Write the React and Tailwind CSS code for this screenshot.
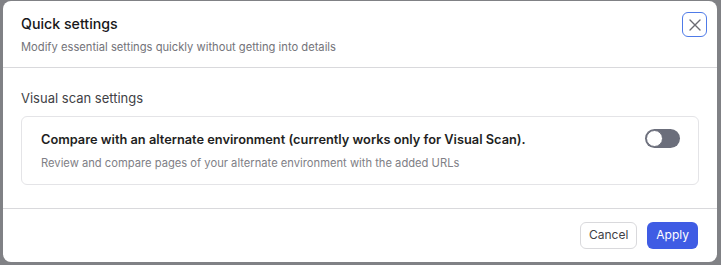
import React, { useState } from 'react';

const App = () => {
  const [enabled, setEnabled] = useState(false);

  return (
    <div className="w-[721px] h-[265px] bg-[#808185] pl-[3px] pr-[4px] pt-[1px] pb-[3px] font-['Inter',sans-serif]">
      <div className="h-full bg-white rounded-lg flex flex-col">
        {/* Header */}
        <div className="flex items-start justify-between pl-[18px] pr-[10px] pt-[10px] h-[67px] border-b border-[#d9d9dc]">
          <div className="pt-[4px]">
            <h2 className="text-[14.2px] leading-[18px] font-medium text-[#18181b]">Quick settings</h2>
            <p className="mt-[7px] text-[11.2px] leading-[14px] text-[#737379]">
              Modify essential settings quickly without getting into details
            </p>
          </div>
          <button className="w-[25px] h-[25px] mt-[1px] rounded-[6px] border-[1.5px] border-[#4f7be8] flex items-center justify-center text-[#6b6b72]">
            <svg width="14" height="14" viewBox="0 0 14 14" fill="none" stroke="currentColor" strokeWidth="1.4" strokeLinecap="round">
              <path d="M2 2l10 10M12 2L2 12" />
            </svg>
          </button>
        </div>

        {/* Body */}
        <div className="flex-1 px-[18px] pt-[22px] border-b border-[#d9d9dc]">
          <h3 className="text-[13px] leading-[16px] text-[#3f3f46]">Visual scan settings</h3>
          <div className="mt-[10px] h-[69px] border border-[#e4e4e7] rounded-[6px] pl-[19px] pr-[18px] flex items-center justify-between">
            <div>
              <p className="text-[12.8px] leading-[16px] font-semibold text-[#1f1f23]">
                Compare with an alternate environment (currently works only for Visual Scan).
              </p>
              <p className="mt-[8px] text-[11.2px] leading-[14px] text-[#808086]">
                Review and compare pages of your alternate environment with the added URLs
              </p>
            </div>
            <button
              onClick={() => setEnabled(!enabled)}
              className="self-start mt-[12px] w-[35px] h-[19px] rounded-full bg-[#6b6e7b] flex items-center p-[1px]"
            >
              <span className="w-[17px] h-[17px] rounded-full bg-white border border-[#6b6e7b]"></span>
            </button>
          </div>
        </div>

        {/* Footer */}
        <div className="h-[53px] flex items-center justify-end gap-[10px] pr-[19px] pb-[1px]">
          <button className="h-[27px] px-[8px] rounded-[6px] border border-[#d9d9dc] text-[12px] text-[#3f3f46]">
            Cancel
          </button>
          <button className="h-[27px] px-[9px] rounded-[6px] bg-[#3f5ce4] text-[12px] text-white">
            Apply
          </button>
        </div>
      </div>
    </div>
  );
};

export default App;
